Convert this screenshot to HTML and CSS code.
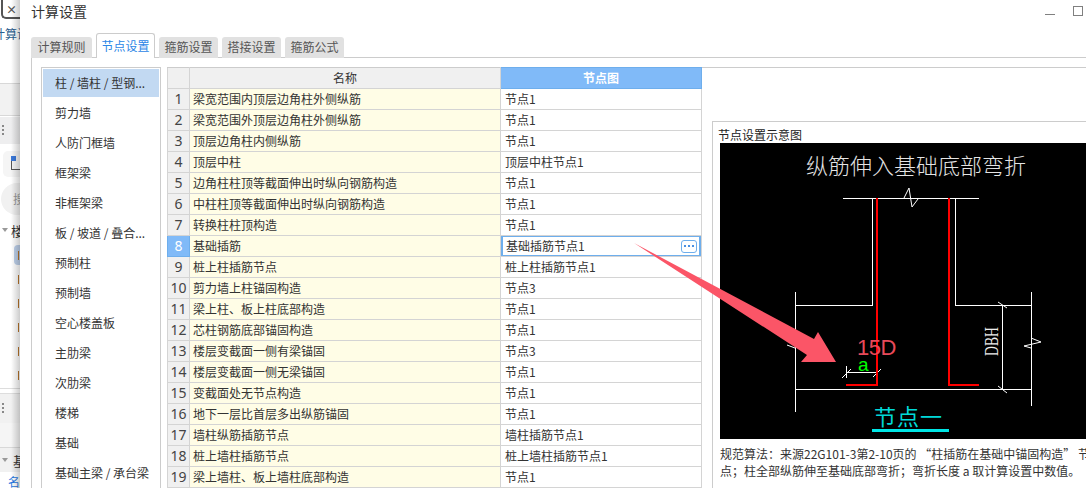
FILE: index.html
```html
<!DOCTYPE html>
<html lang="zh-CN">
<head>
    <title>计算设置</title>
    <link rel="stylesheet" href="styles.css">
</head>
<body>
    <!-- main window peeking out behind the dialog -->
    <div class="behind">
        <div class="behind-close"><span>×</span></div>
        <div class="behind-title">计算设置</div>
        <div class="behind-band"></div>
        <div class="behind-grip"><i></i></div>
        <div class="behind-tool"><u></u><b></b></div>
        <div class="behind-search">搜</div>
        <div class="behind-tree"><em></em>楼</div>
        <div class="behind-tag"></div>
        <div class="behind-dash"></div>
        <div class="behind-dash"></div>
        <div class="behind-dash"></div>
        <div class="behind-dash"></div>
        <div class="behind-dash"></div>
        <div class="behind-dash"></div>
        <div class="behind-grip lower"><i></i></div>
        <div class="behind-band lower"></div>
        <div class="behind-tree base"><em></em>基</div>
        <div class="behind-link">名</div>
    </div>

    <div class="dialog">
        <div class="titlebar">
            <span class="title">计算设置</span>
            <span class="win-min"></span>
            <span class="win-max"></span>
        </div>

        <div class="tabs">
            <div class="tab">计算规则</div>
            <div class="tab active">节点设置</div>
            <div class="tab">箍筋设置</div>
            <div class="tab">搭接设置</div>
            <div class="tab">箍筋公式</div>
        </div>

        <div class="panel">
            <ul class="sidebar">
                <li class="selected">柱 / 墙柱 / 型钢...</li>
                <li>剪力墙</li>
                <li>人防门框墙</li>
                <li>框架梁</li>
                <li>非框架梁</li>
                <li>板 / 坡道 / 叠合...</li>
                <li>预制柱</li>
                <li>预制墙</li>
                <li>空心楼盖板</li>
                <li>主肋梁</li>
                <li>次肋梁</li>
                <li>楼梯</li>
                <li>基础</li>
                <li>基础主梁 / 承台梁</li>
            </ul>

            <div class="main">
                <table class="grid">
                    <colgroup>
                        <col class="col-no">
                        <col class="col-name">
                        <col class="col-node">
                    </colgroup>
                    <thead>
                        <tr><th></th><th>名称</th><th class="current">节点图</th></tr>
                    </thead>
                    <tbody>
                        <tr><th>1</th><td class="name">梁宽范围内顶层边角柱外侧纵筋</td><td>节点1</td></tr>
                        <tr><th>2</th><td class="name">梁宽范围外顶层边角柱外侧纵筋</td><td>节点1</td></tr>
                        <tr><th>3</th><td class="name">顶层边角柱内侧纵筋</td><td>节点1</td></tr>
                        <tr><th>4</th><td class="name">顶层中柱</td><td>顶层中柱节点1</td></tr>
                        <tr><th>5</th><td class="name">边角柱柱顶等截面伸出时纵向钢筋构造</td><td>节点1</td></tr>
                        <tr><th>6</th><td class="name">中柱柱顶等截面伸出时纵向钢筋构造</td><td>节点1</td></tr>
                        <tr><th>7</th><td class="name">转换柱柱顶构造</td><td>节点1</td></tr>
                        <tr><th class="current">8</th><td class="name">基础插筋</td><td class="editing"><div class="edit-box"><span>基础插筋节点1</span><span class="more"><i></i><i></i><i></i></span></div></td></tr>
                        <tr><th>9</th><td class="name">桩上柱插筋节点</td><td>桩上柱插筋节点1</td></tr>
                        <tr><th>10</th><td class="name">剪力墙上柱锚固构造</td><td>节点3</td></tr>
                        <tr><th>11</th><td class="name">梁上柱、板上柱底部构造</td><td>节点1</td></tr>
                        <tr><th>12</th><td class="name">芯柱钢筋底部锚固构造</td><td>节点1</td></tr>
                        <tr><th>13</th><td class="name">楼层变截面一侧有梁锚固</td><td>节点3</td></tr>
                        <tr><th>14</th><td class="name">楼层变截面一侧无梁锚固</td><td>节点1</td></tr>
                        <tr><th>15</th><td class="name">变截面处无节点构造</td><td>节点1</td></tr>
                        <tr><th>16</th><td class="name">地下一层比首层多出纵筋锚固</td><td>节点1</td></tr>
                        <tr><th>17</th><td class="name">墙柱纵筋插筋节点</td><td>墙柱插筋节点1</td></tr>
                        <tr><th>18</th><td class="name">桩上墙柱插筋节点</td><td>桩上墙柱插筋节点1</td></tr>
                        <tr><th>19</th><td class="name">梁上墙柱、板上墙柱底部构造</td><td>节点1</td></tr>
                    </tbody>
                </table>

                <div class="preview">
                    <div class="preview-label">节点设置示意图</div>
                    <svg class="drawing" width="366" height="296" viewBox="0 0 366 296">
                        <rect width="366" height="296" fill="#000"/>
                        <text class="d-title" x="86" y="31">纵筋伸入基础底部弯折</text>
                        <g class="d-white">
                            <path d="M123 55.5H259M152.5 55V162.5H75.5M235.5 55V162.5H311.5"/>
                            <path d="M75.5 149V269M311.5 149V263M75 246.5H312M282.5 162V247"/>
                            <path d="M126 229.5H157M126.5 223V235"/>
                        </g>
                        <g class="d-thin">
                            <path d="M184 55L189 45L192 64L198 56"/>
                            <path d="M278 159L287 165M278 243L287 250M122 235L131 226M153 234L161 226"/>
                            <path d="M311 195L321 199L304 203L311 205"/>
                            <path d="M67 202L75 205"/>
                        </g>
                        <path class="d-red" d="M157 55V243M229 55V243M126 242H158M228 242H259"/>
                        <text class="d-len" x="137" y="212">15D</text>
                        <text class="d-a" x="138" y="228">a</text>
                        <text class="d-dbh" transform="translate(278 213) rotate(-90)" textLength="29" lengthAdjust="spacingAndGlyphs">DBH</text>
                        <text class="d-node" x="154" y="282">节点一</text>
                        <rect x="152" y="286" width="77" height="3" fill="#00e6e6"/>
                    </svg>
                    <p class="note">规范算法：来源22G101-3第2-10页的 “柱插筋在基础中锚固构造” 节<br>点；柱全部纵筋伸至基础底部弯折；弯折长度 a 取计算设置中数值。</p>
                </div>
            </div>
        </div>
    </div>

    <!-- annotation arrow pasted on top of the screenshot -->
    <svg class="arrow" width="1086" height="488" viewBox="0 0 1086 488">
        <polygon points="634,243 814,339 818,332 836,362 801,362 807,355" fill="#fb5567"/>
    </svg>
</body>
</html>
```

FILE: styles.css
```css
html, body {
    margin: 0;
    height: 488px;
    overflow: hidden;
}

body {
    position: relative;
    display: flex;
    background-color: #fff;
    font-family: "Noto Sans CJK SC", "Liberation Sans", sans-serif;
    font-size: 12px;
    color: #333;
}

/* window behind the dialog */
.behind {
    position: relative;
    flex: 0 0 20px;
    height: 488px;
    overflow: hidden;
    background-color: #fff;
}

.behind::after {
    content: "";
    position: absolute;
    top: 0;
    right: 0;
    bottom: 0;
    width: 9px;
    background: linear-gradient(to right, rgba(0, 0, 0, 0), rgba(0, 0, 0, 0.2));
}

.behind-close {
    width: 17px;
    height: 17px;
    margin-left: 1px;
    border-left: 2px solid #555;
    border-bottom: 2px solid #555;
    border-bottom-left-radius: 5px;
    text-align: center;
    font-size: 11px;
    line-height: 18px;
    font-weight: bold;
    color: #555;
}

.behind-title {
    height: 20px;
    margin: 5px 0 0 -7px;
    line-height: 20px;
    color: #2d5f8f;
    white-space: nowrap;
}

.behind-band {
    height: 31px;
    margin-top: 39px;
    background-color: #f2f2f2;
    border-top: 1px solid #d8d8d8;
    border-bottom: 1px solid #d8d8d8;
}

.behind-grip {
    height: 27px;
    margin-top: 1px;
    background-color: #eeeeef;
}

.behind-grip i {
    display: block;
    width: 5px;
    height: 13px;
    margin-left: 1px;
    position: relative;
    top: 7px;
    background: radial-gradient(circle, #888 1px, transparent 1px) 0 0 / 4px 4px;
}

.behind-tool {
    height: 21px;
    margin: 7px 0 0 3px;
    padding: 5px 0 0 8px;
    background-color: #f5f5f5;
    border-radius: 5px 0 0 5px;
}

.behind-tool u {
    display: block;
    width: 5px;
    height: 5px;
    background-color: #3b78d8;
}

.behind-tool b {
    display: block;
    width: 8px;
    height: 8px;
    border-left: 1px solid #555;
    border-bottom: 1px solid #555;
}

.behind-search {
    height: 32px;
    margin: 6px 0 0 1px;
    padding-left: 12px;
    background-color: #f1f1f1;
    border-radius: 16px 0 0 16px;
    line-height: 32px;
    color: #999;
    white-space: nowrap;
}

.behind-tree {
    display: flex;
    align-items: center;
    gap: 3px;
    height: 20px;
    margin-top: 5px;
    padding-left: 2px;
    font-size: 13px;
    white-space: nowrap;
}

.behind-tree em {
    flex: none;
    width: 0;
    height: 0;
    border: 3px solid transparent;
    border-top: 4px solid #999;
    border-bottom: none;
}

.behind-tree.base {
    height: 24px;
    margin-top: 0;
    padding-left: 2px;
    gap: 5px;
    background-color: #f1f1f1;
}

.behind-tag {
    width: 8px;
    height: 20px;
    margin: 5px 0 0 14px;
    background-color: #bdd0ea;
    border-radius: 4px 0 0 4px;
}

.behind-dash {
    width: 1px;
    height: 9px;
    margin: 15px 0 0 18px;
    background-color: #b8742a;
}

.behind-tag + .behind-dash {
    margin-top: -14px;
    margin-bottom: 15px;
}

.behind-grip.lower {
    box-sizing: border-box;
    height: 35px;
    margin-top: 8px;
    border-top: 1px solid #ddd;
    background-color: #f1f1f1;
    box-shadow: inset 0 4px 0 #fff, inset 0 5px 0 #ddd;
}

.behind-grip.lower i {
    top: 13px;
}

.behind-band.lower {
    height: 24px;
    margin-top: 0;
    border-top: none;
    background-color: #f5f5f5;
}

.behind-link {
    margin: 1px 0 0 8px;
    font-size: 12px;
    color: #2a7ae2;
}

/* dialog */
.dialog {
    flex: 0 0 1066px;
    height: 488px;
    overflow: hidden;
    background-color: #fff;
}

.titlebar {
    display: flex;
    align-items: center;
    box-sizing: border-box;
    height: 24px;
    padding: 0 3px 0 11px;
}

.title {
    flex: 1;
    margin-top: -3px;
    font-size: 14px;
    color: #333;
}

.win-min {
    width: 10px;
    height: 1px;
    margin: 5px 18px 0 0;
    background-color: #808080;
}

.win-max {
    width: 8px;
    height: 8px;
    margin-top: -2px;
    border: 1px solid #808080;
}

.tabs {
    display: flex;
    align-items: flex-end;
    gap: 4px;
    height: 34px;
    margin-left: 11px;
    margin-bottom: -1px;
}

.tab {
    position: relative;
    width: 59px;
    height: 21px;
    background-color: #e1e1e1;
    border-radius: 3px 3px 0 0;
    text-align: center;
    line-height: 19px;
    color: #555;
}

.tab:first-child {
    width: 61px;
}

.tab.active {
    width: 57px;
    height: 24px;
    background-color: #fff;
    border: 1px solid #ccc;
    border-bottom: none;
    line-height: 24px;
    color: #2b86e6;
    z-index: 1;
}

.panel {
    display: flex;
    gap: 6px;
    height: 431px;
    margin-left: 11px;
    padding: 9px 0 0 9px;
    border-top: 1px solid #ccc;
    border-left: 1px solid #ccc;
}

.sidebar {
    flex: 0 0 116px;
    height: 440px;
    margin: 0;
    padding: 1px;
    list-style: none;
    border: 1px solid #ccc;
    border-bottom: none;
}

.sidebar li {
    height: 28px;
    margin-bottom: 2px;
    padding-left: 12px;
    line-height: 28px;
    white-space: nowrap;
}

.sidebar li.selected {
    background-color: #c2d9f2;
}

.main {
    display: flex;
    flex: 1;
    align-items: flex-start;
    gap: 10px;
    border-top: 1px solid #ccc;
}

/* table */
.grid {
    flex: none;
    width: 534px;
    margin-top: -1px;
    table-layout: fixed;
    border-collapse: collapse;
}

.col-no { width: 22px; }
.col-name { width: 311px; }
.col-node { width: 201px; }

.grid th,
.grid td {
    height: 20px;
    padding: 0;
    border: 1px solid #d4d4d4;
    font-weight: normal;
    line-height: 20px;
    white-space: nowrap;
    overflow: hidden;
}

.grid thead th {
    background-color: #f0f0f0;
    border-top-color: #ccc;
}

.grid tbody th {
    background-color: #f0f0f0;
    font-family: "Noto Sans", "Liberation Sans", sans-serif;
    font-size: 14px;
    color: #444;
}

.grid td {
    padding-left: 4px;
}

.grid td.name {
    padding-left: 3px;
    background-color: #fffde6;
}

.grid th.current {
    background-color: #80baf8;
    border-color: #6eaeec;
    color: #fff;
    font-weight: bold;
}

.grid tbody th.current {
    font-weight: normal;
}

.grid td.editing {
    padding: 0;
}

.edit-box {
    display: flex;
    align-items: center;
    justify-content: space-between;
    box-sizing: border-box;
    height: 22px;
    margin: -1px 0;
    padding: 0 2px 0 3px;
    border: 2px solid #6eaeec;
    background-color: #fff;
}

.more {
    display: flex;
    align-items: center;
    justify-content: center;
    gap: 2px;
    width: 14px;
    height: 11px;
    border: 1px solid #6eaeec;
    border-radius: 3px;
}

.more i {
    width: 2px;
    height: 2px;
    background-color: #4a90e2;
}

/* picture on the right */
.preview {
    flex: none;
    width: 374px;
    height: 367px;
    margin-top: 53px;
    padding-left: 5px;
    border-top: 1px solid #ccc;
    border-left: 1px solid #ccc;
}

.preview-label {
    height: 21px;
    line-height: 25px;
    color: #222;
}

.drawing {
    display: block;
    margin-left: 2px;
}

.d-title {
    font-size: 22px;
    font-weight: 300;
    fill: #e4e4e4;
}

.d-white path {
    fill: none;
    stroke: #fff;
    stroke-width: 1;
    shape-rendering: crispEdges;
}

.d-thin path {
    fill: none;
    stroke: #fff;
    stroke-width: 1;
}

.d-red {
    fill: none;
    stroke: #f00;
    stroke-width: 2;
    shape-rendering: crispEdges;
}

.d-len {
    font-family: "Liberation Sans", sans-serif;
    font-size: 22px;
    letter-spacing: -0.5px;
    fill: #e84a5a;
}

.d-a {
    font-family: "Liberation Sans", sans-serif;
    font-size: 19px;
    fill: #0f0;
}

.d-dbh {
    font-family: "Liberation Serif", serif;
    font-size: 18px;
    fill: #eee;
}

.d-node {
    font-size: 22px;
    letter-spacing: 1px;
    fill: #00d8d8;
}

.note {
    margin: 6px 0 0 2px;
    line-height: 17px;
    white-space: nowrap;
    color: #333;
}

.arrow {
    position: absolute;
    top: 0;
    left: 0;
    pointer-events: none;
}
```
